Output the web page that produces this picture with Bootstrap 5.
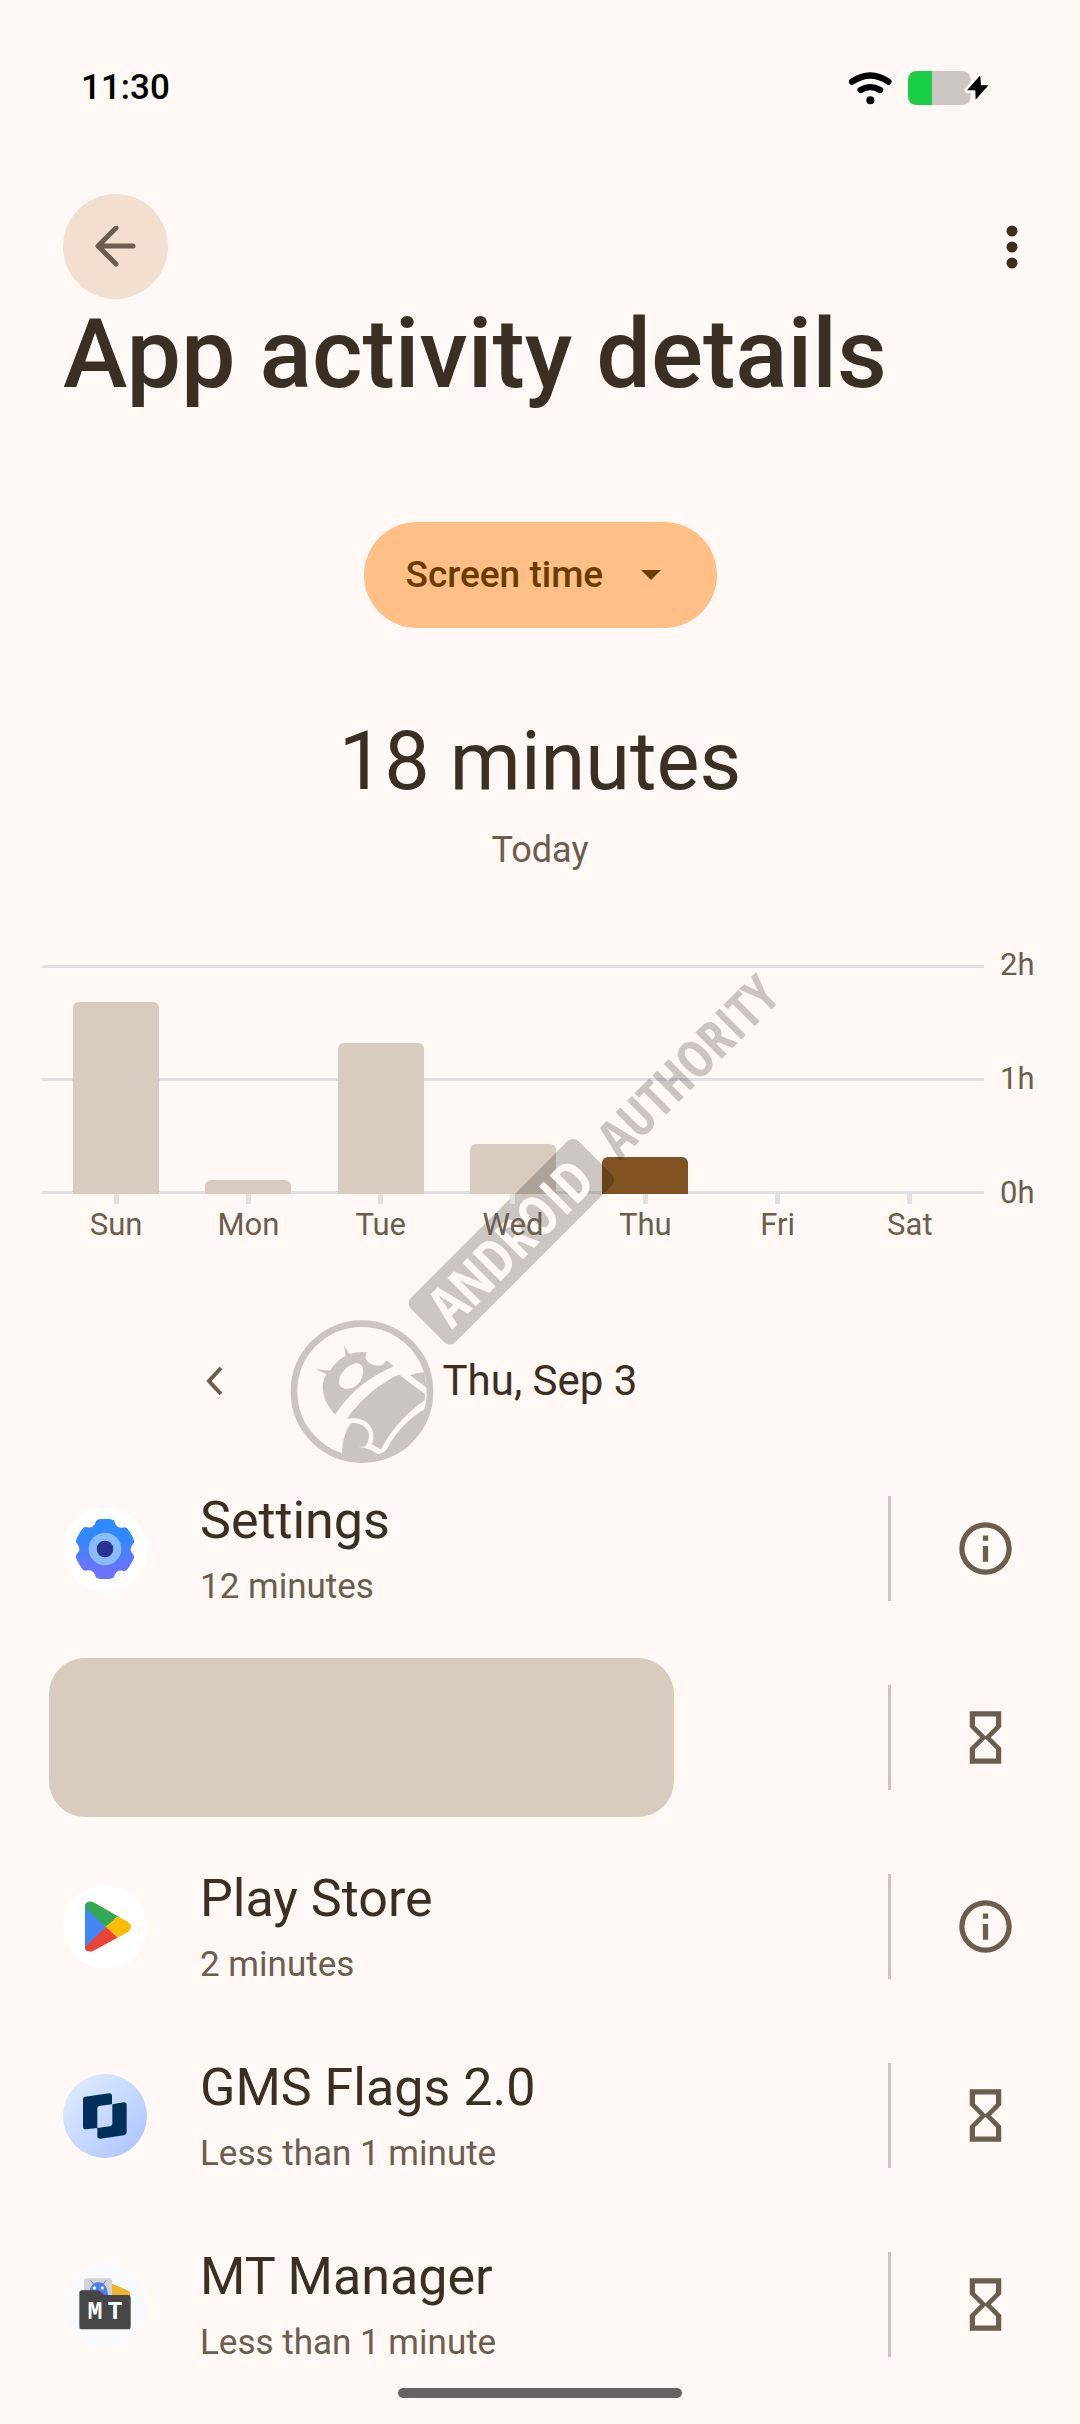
<!DOCTYPE html>
<html lang="en">
<head>
<meta charset="utf-8">
<meta name="viewport" content="width=device-width, initial-scale=1">
<title>App activity details</title>
<link href="https://cdn.jsdelivr.net/npm/bootstrap@5.3.0/dist/css/bootstrap.min.css" rel="stylesheet">
<style>
  :root { --surface: #fff8f4; --ink: #3b2e24; --ink-soft: #6b5d50; --sand: #d9cbbd; --grid: #e1e0e0; }
  body { background: var(--surface); color: var(--ink); font-family: Roboto, "Liberation Sans", sans-serif; }
  svg { display: block; flex: none; }
  .screen { min-height: 100vh; overflow: hidden; }
  .status-bar { padding: 66px 92px 0 81px; font-size: 35px; line-height: 44px; font-weight: 500; color: #000; }
  .status-icons { gap: 16px; }
  .app-bar { padding: 84px 44px 0 63px; }
  .plain-btn { border: 0; background: none; padding: 0; color: inherit; display: flex; align-items: center; justify-content: center; }
  .back-btn { width: 105px; height: 105px; background: #f2dfd0; color: var(--ink-soft); }
  .more-btn { width: 48px; height: 105px; }
  .page-title { margin: 0; padding: 0 63px; font-size: 97px; line-height: 110px; font-weight: 500; }
  .metric { margin-top: 113px; color: #693c00; }
  .metric select { appearance: none; border: 0; border-radius: 53px; background: #ffbf86; color: inherit; height: 106px; padding: 0 113px 0 42px; font-size: 37px; font-weight: 500; }
  .metric svg { right: 56px; top: 48px; pointer-events: none; }
  .total { margin: 86px 0 0; font-size: 81px; line-height: 96px; font-weight: 400; }
  .total-day { margin: 16px 0 0; font-size: 36px; line-height: 48px; color: var(--ink-soft); }
  .chart { margin-top: 91px; padding-left: 42px; font-size: 31px; color: var(--ink-soft); }
  .plot { height: 229px; padding: 0 8px;
    background: linear-gradient(var(--grid), var(--grid)) 0 0 / 100% 3px no-repeat,
                linear-gradient(var(--grid), var(--grid)) 0 50% / 100% 3px no-repeat,
                linear-gradient(var(--grid), var(--grid)) 0 100% / 100% 3px no-repeat; }
  .day-bar { width: 65%; background: var(--sand); border-radius: 6px 6px 0 0; }
  .day-bar.today { background: #825322; }
  .days { padding: 0 8px; line-height: 42px; position: relative; z-index: 2; }
  .days > div::before { content: ""; display: block; width: 5px; height: 10px; margin: 0 auto; background: var(--grid); }
  .hours { width: 96px; padding-left: 16px; height: 264px; margin: -18px 0; line-height: 36px; }
  .date-nav { margin-top: 111px; padding: 0 191px; font-size: 42px; line-height: 48px; }
  .date-nav .plain-btn, .nav-spacer { width: 48px; height: 48px; }
  .apps { margin-top: 49px; }
  .app-row { height: 189px; }
  .app-main { padding-left: 63px; gap: 53px; }
  .app-name { margin: 0 0 10px; padding-top: 2px; font-size: 52px; line-height: 64px; font-weight: 400; }
  .app-time { margin: 0; font-size: 35px; line-height: 48px; color: var(--ink-soft); }
  .hidden-app { margin-left: 49px; width: 625px; height: 159px; border-radius: 36px; background: var(--sand); }
  .rule { width: 3px; height: 105px; background: #cfc4bd; }
  .row-btn { width: 189px; height: 189px; color: var(--ink-soft); }
  .watermark { left: 270px; top: 940px; z-index: 1; pointer-events: none; font-family: "Open Sans Condensed", "Roboto Condensed", sans-serif; font-weight: 700; }
  .home-pill { left: 50%; bottom: 26px; width: 284px; height: 10px; border-radius: 5px; background: #666360; transform: translateX(-50%); }
</style>
<script src="https://cdn.jsdelivr.net/npm/bootstrap@5.3.0/dist/js/bootstrap.bundle.min.js"></script>
</head>
<body>
<div class="screen position-relative">
  <header>
    <div class="status-bar d-flex align-items-center justify-content-between">
      <span>11:30</span>
      <div class="status-icons d-flex align-items-center">
        <svg width="44" height="34" viewBox="0 0 132 102" fill="none" stroke="#000" stroke-linecap="round" stroke-width="19"><path d="M12 32Q67-5 121 32M38 57Q67 40 96 57"/><circle cx="67" cy="88" r="12" fill="#000" stroke="none"/></svg>
        <svg width="80" height="34" viewBox="0 0 240 102"><path d="M72 0H28Q0 0 0 28V74Q0 102 28 102H72Z" fill="#1bce48"/><path d="M72 0H160Q188 0 188 28V74Q188 102 160 102H72Z" fill="#ccc6c2"/><path d="M215 15 177 58H202L203 86 241 43H219L217 17Z" fill="#000" stroke="#fff8f4" stroke-width="16" stroke-linejoin="round" paint-order="stroke"/></svg>
      </div>
    </div>
    <div class="app-bar d-flex justify-content-between">
      <button class="plain-btn back-btn rounded-circle" aria-label="Back"><svg width="42" height="42" viewBox="0 0 42 42" fill="none" stroke="currentColor" stroke-width="5" stroke-linecap="round" stroke-linejoin="round"><path d="M38 20H3M21 2 3 20 21 38"/></svg></button>
      <button class="plain-btn more-btn" aria-label="More options"><svg width="12" height="44" viewBox="0 0 12 44" fill="currentColor"><circle cx="6" cy="6" r="5.500"/><circle cx="6" cy="22" r="5.500"/><circle cx="6" cy="38" r="5.500"/></svg></button>
    </div>
    <h1 class="page-title">App activity details</h1>
  </header>

  <main>
    <div class="metric d-flex justify-content-center">
      <div class="position-relative">
        <select aria-label="Metric"><option>Screen time</option></select>
        <svg class="position-absolute" width="20" height="10" viewBox="0 0 20 10" fill="currentColor"><path d="M0 0H20L10 10Z"/></svg>
      </div>
    </div>
    <h2 class="total text-center">18 minutes</h2>
    <p class="total-day text-center">Today</p>

    <section class="chart d-flex" aria-label="Screen time by day">
      <div class="flex-fill">
        <div class="plot d-flex align-items-end">
          <div class="col h-100 d-flex align-items-end justify-content-center"><div class="day-bar" style="height:84%"></div></div>
          <div class="col h-100 d-flex align-items-end justify-content-center"><div class="day-bar" style="height:6%"></div></div>
          <div class="col h-100 d-flex align-items-end justify-content-center"><div class="day-bar" style="height:66%"></div></div>
          <div class="col h-100 d-flex align-items-end justify-content-center"><div class="day-bar" style="height:22%"></div></div>
          <div class="col h-100 d-flex align-items-end justify-content-center"><div class="day-bar today" style="height:16%"></div></div>
          <div class="col h-100"></div>
          <div class="col h-100"></div>
        </div>
        <div class="days d-flex text-center">
          <div class="col">Sun</div><div class="col">Mon</div><div class="col">Tue</div><div class="col">Wed</div><div class="col">Thu</div><div class="col">Fri</div><div class="col">Sat</div>
        </div>
      </div>
      <div class="hours d-flex flex-column justify-content-between"><span>2h</span><span>1h</span><span>0h</span></div>
    </section>

    <nav class="date-nav d-flex align-items-center justify-content-between" aria-label="Day">
      <button class="plain-btn" aria-label="Previous day"><svg width="18" height="30" viewBox="0 0 18 30" fill="none" stroke="#6b5d50" stroke-width="4"><path d="M15 2 3 15 15 28"/></svg></button>
      <span>Thu, Sep 3</span>
      <span class="nav-spacer"></span>
    </nav>

    <ul class="apps list-unstyled mb-0">
      <li class="app-row d-flex align-items-center">
        <div class="app-main d-flex align-items-center flex-fill">
          <svg width="84" height="84" viewBox="-126 -126 252 252">
            <defs>
              <linearGradient id="gearFill" x1="0" y1="0" x2="0" y2="1"><stop offset=".3" stop-color="#2f89ff"/><stop offset=".8" stop-color="#6a74fb"/></linearGradient>
              <path id="gearTooth" d="M0 0-20-88Q-18-90-16-90H16Q27-90 30-78 35-63 52-64 64-68 70-59L0 2Z"/>
              <clipPath id="gearShape"><use href="#gearTooth"/><use href="#gearTooth" transform="rotate(60)"/><use href="#gearTooth" transform="rotate(120)"/><use href="#gearTooth" transform="rotate(180)"/><use href="#gearTooth" transform="rotate(240)"/><use href="#gearTooth" transform="rotate(300)"/></clipPath>
            </defs>
            <circle r="126" fill="#fff"/><circle r="91" fill="url(#gearFill)" clip-path="url(#gearShape)"/><circle r="49" fill="#89bcf9"/><circle r="25" fill="#2b3391"/>
          </svg>
          <div><h3 class="app-name">Settings</h3><p class="app-time">12 minutes</p></div>
        </div>
        <div class="rule"></div>
        <button class="plain-btn row-btn" aria-label="Settings info"><svg width="63" height="63" viewBox="0 0 24 24" fill="currentColor"><path d="M11 7h2v2h-2zm0 4h2v6h-2zm1-9a10 10 0 1 0 0 20 10 10 0 0 0 0-20zm0 18a8 8 0 1 1 0-16 8 8 0 0 1 0 16z"/></svg></button>
      </li>
      <li class="app-row d-flex align-items-center">
        <div class="flex-fill"><div class="hidden-app"></div></div>
        <div class="rule"></div>
        <button class="plain-btn row-btn" aria-label="Set timer"><svg width="63" height="63" viewBox="0 0 24 24" fill="currentColor"><path d="M6 2v6l4 4-4 4v6h12v-6l-4-4 4-4V2H6zm10 14.500V20H8v-3.500l4-4 4 4zm-4-5l-4-4V4h8v3.500l-4 4z"/></svg></button>
      </li>
      <li class="app-row d-flex align-items-center">
        <div class="app-main d-flex align-items-center flex-fill">
          <svg width="84" height="84" viewBox="-42 -42 84 84">
            <defs><clipPath id="playShape"><path d="M-20-21Q-19-27-12-25L23-5Q29 0 23 5L-12 24Q-19 26-20 21Z"/></clipPath></defs>
            <circle r="42" fill="#fff"/>
            <g clip-path="url(#playShape)"><path d="M-22-28 1 0-22 28Z" fill="#4285f4"/><path d="M-20-20V-30L26-10 12-10 1 0Z" fill="#34a853"/><path d="M1 0 12-10 20-18H32V18H20L12 10Z" fill="#fbbc04"/><path d="M1 0 12 10 20 18-20 32V20Z" fill="#ea4335"/></g>
          </svg>
          <div><h3 class="app-name">Play Store</h3><p class="app-time">2 minutes</p></div>
        </div>
        <div class="rule"></div>
        <button class="plain-btn row-btn" aria-label="Play Store info"><svg width="63" height="63" viewBox="0 0 24 24" fill="currentColor"><path d="M11 7h2v2h-2zm0 4h2v6h-2zm1-9a10 10 0 1 0 0 20 10 10 0 0 0 0-20zm0 18a8 8 0 1 1 0-16 8 8 0 0 1 0 16z"/></svg></button>
      </li>
      <li class="app-row d-flex align-items-center">
        <div class="app-main d-flex align-items-center flex-fill">
          <svg width="84" height="84" viewBox="39 68 252 252">
            <defs><linearGradient id="flagFill" x1="0" y1="0" x2="1" y2="1"><stop offset=".1" stop-color="#dcebff"/><stop offset=".9" stop-color="#b0c6ff"/></linearGradient></defs>
            <circle cx="165" cy="194" r="126" fill="url(#flagFill)"/>
            <path fill="#03305a" d="M99 143Q99 137 105 136L177 126Q186 126 186 134V159L151 163Q142 164 142 172V230L108 234Q99 234 99 226ZM187 159 221 153Q230 153 230 161V242Q230 250 222 252L151 262Q142 262 142 254V230L179 225Q187 224 187 216Z"/>
          </svg>
          <div><h3 class="app-name">GMS Flags 2.0</h3><p class="app-time">Less than 1 minute</p></div>
        </div>
        <div class="rule"></div>
        <button class="plain-btn row-btn" aria-label="Set GMS Flags timer"><svg width="63" height="63" viewBox="0 0 24 24" fill="currentColor"><path d="M6 2v6l4 4-4 4v6h12v-6l-4-4 4-4V2H6zm10 14.500V20H8v-3.500l4-4 4 4zm-4-5l-4-4V4h8v3.500l-4 4z"/></svg></button>
      </li>
      <li class="app-row d-flex align-items-center">
        <div class="app-main d-flex align-items-center flex-fill">
          <svg width="84" height="84" viewBox="39 635 252 252">
            <circle cx="165" cy="761" r="126" fill="#f8f9fd"/>
            <path d="M186 697 236 718Q241 721 240 735H186Z" fill="#edb52c"/>
            <rect x="102" y="681" width="84" height="70" rx="6" fill="#d3d3d3"/>
            <path d="M119 728Q121 694 145 694 170 694 172 728V740H119ZM122 687 134 702M168 687 157 702" fill="#4c7ff0" stroke="#4c7ff0" stroke-width="3"/>
            <circle cx="133" cy="710" r="5" fill="#fff"/><circle cx="157" cy="710" r="5" fill="#fff"/>
            <path d="M88 725Q88 717 96 717H140Q147 717 151 721L163 731H234Q242 731 242 739V826Q242 834 234 834H96Q88 834 88 826Z" fill="#464646"/>
            <g fill="#fff" font-family="Liberation Mono, monospace" font-weight="700" font-size="75" text-anchor="middle"><text x="135" y="804">M</text><text x="195" y="804">T</text></g>
          </svg>
          <div><h3 class="app-name">MT Manager</h3><p class="app-time">Less than 1 minute</p></div>
        </div>
        <div class="rule"></div>
        <button class="plain-btn row-btn" aria-label="Set MT Manager timer"><svg width="63" height="63" viewBox="0 0 24 24" fill="currentColor"><path d="M6 2v6l4 4-4 4v6h12v-6l-4-4 4-4V2H6zm10 14.500V20H8v-3.500l4-4 4 4zm-4-5l-4-4V4h8v3.500l-4 4z"/></svg></button>
      </li>
    </ul>
  </main>

  <!-- Diagonal watermark lying over the chart and the date row -->
  <svg class="watermark position-absolute" width="540" height="540" viewBox="0 0 1568 1568">
    <g transform="translate(701 876) rotate(-45)">
      <rect x="-344" y="-91" width="688" height="182" rx="22" opacity=".2"/>
      <text x="-303" y="59" font-size="163" fill="#fff8f4">ANDROID</text>
      <text x="389" y="57" font-size="152" opacity=".2">AUTHORITY</text>
    </g>
    <g transform="translate(29 1045) scale(.968)" opacity=".2">
      <circle cx="246" cy="275" r="204" fill="none" stroke="#000" stroke-width="20"/>
      <path fill-rule="evenodd" d="M166 344C125 300 120 252 139 223L105 207 150 212Q170 180 197 168L192 137 208 162Q235 154 262 157C252 165 255 185 275 193 295 201 308 196 312 190L320 181 341 200C270 230 210 275 166 344ZM183 261C205 275 235 262 245 235 255 205 248 192 232 190 205 188 160 235 183 261Z"/>
      <path d="M200 358C240 300 300 250 357 224L436 284 434 301C385 335 335 385 303 449L276 433C290 395 270 357 222 355Q210 354 200 358Z"/>
      <path d="M390 226Q410 218 432 217L441 264Z"/>
      <path d="M186 460C188 420 195 395 213 370 250 366 278 395 264 424L257 439 235 441Q270 443 293 464 312 461 322 446C350 390 395 350 438 325 430 415 370 480 260 482 230 482 205 472 186 460Z"/>
    </g>
  </svg>

  <div class="home-pill position-absolute"></div>
</div>
</body>
</html>
